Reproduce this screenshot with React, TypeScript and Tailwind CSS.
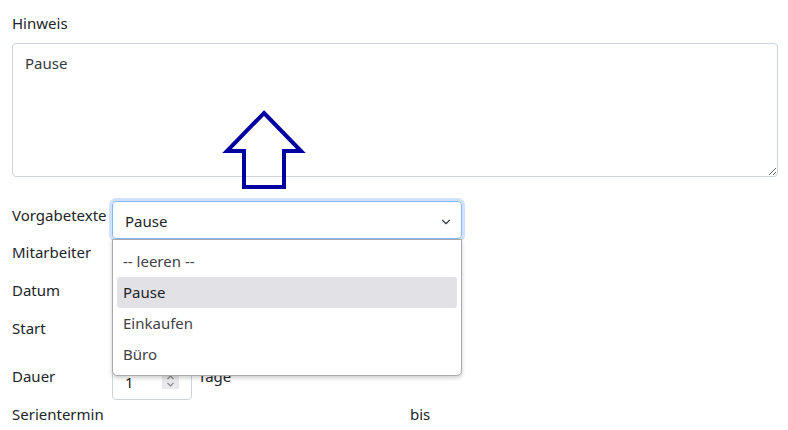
import { ChevronDown } from 'lucide-react';

const font = { fontFamily: '"Noto Sans", "Open Sans", sans-serif' };

function Row({ label, children, className = '' }: { label: string; children?: React.ReactNode; className?: string }) {
  return (
    <div className={`flex h-[38px] ${className}`}>
      <div className="w-[100px] shrink-0 pt-[2px] leading-6 whitespace-nowrap">{label}</div>
      <div className="flex-1 flex items-start">{children}</div>
    </div>
  );
}

export default function App() {
  const options = ['-- leeren --', 'Pause', 'Einkaufen', 'Büro'];

  return (
    <div className="relative w-[788px] h-[430px] overflow-hidden bg-white text-[15px] text-[#212529] px-3 pt-[11px]" style={font}>
      {/* Hinweis */}
      <div className="leading-6 mb-2">Hinweis</div>
      <textarea
        readOnly
        value="Pause"
        className="block w-[766px] h-[134px] border border-[#ced4da] rounded-[4px] px-3 py-[7px] leading-6 text-[#343a40] outline-none resize"
      />

      {/* Form rows */}
      <div className="mt-6 relative">
        <Row label="Vorgabetexte">
          <div className="w-[350px] h-[38px] border border-[#86b7fe] rounded-[4px] shadow-[0_0_0_3px_rgba(13,110,253,0.2)] flex items-center justify-between pl-3 pr-2">
            <span className="pt-[2px]">Pause</span>
            <ChevronDown size={14} strokeWidth={2} className="text-[#343a40] mt-1" />
          </div>
        </Row>
        <Row label="Mitarbeiter" className="h-[37px] -mt-[1px]" />
        <Row label="Datum" className="h-[37px]" />
        <Row label="Start" className="h-[38px]" />
        <Row label="Dauer" className="mt-[10px]">
          <div className="flex items-start gap-[6px]">
            <div className="w-[80px] h-[38px] border border-[#ced4da] rounded-[4px] flex items-center justify-between pl-3 pr-3">
              <span className="pt-[2px]">1</span>
              <div className="w-[17px] h-[16px] bg-[#e9e9ed] flex flex-col items-center justify-center text-[#8a8a8a]">
                <svg width="9" height="14" viewBox="0 0 9 14" fill="none" stroke="currentColor" strokeWidth="1.2">
                  <path d="M1.5 5 L4.5 2 L7.5 5" />
                  <path d="M1.5 9 L4.5 12 L7.5 9" />
                </svg>
              </div>
            </div>
            <span className="leading-6 pt-[2px]">Tage</span>
          </div>
        </Row>
        <div className="flex h-[38px]">
          <div className="w-[398px] shrink-0 pt-[2px] leading-6">Serientermin</div>
          <div className="pt-[2px] leading-6">bis</div>
        </div>

        {/* open dropdown list */}
        <div className="absolute left-[100px] top-[38px] w-[350px] h-[137px] z-10 bg-white border border-[#a9a9b0] rounded-b-[5px] shadow-[0_2px_4px_rgba(0,0,0,0.2)] px-[4px] pt-[6px]">
          {options.map((o) => (
            <div
              key={o}
              className={`h-[31px] leading-[31px] px-[6px] rounded-[3px] ${o === 'Pause' ? 'bg-[#e2e1e6] text-[#212529]' : 'text-[#3f3f46]'}`}
            >
              {o}
            </div>
          ))}
        </div>
      </div>

      {/* annotation arrow */}
      <svg className="absolute left-[220px] top-[106px] z-20" width="90" height="86" viewBox="220 106 90 86">
        <path
          d="M264 113 L301 151 L284 151 L284 187 L244 187 L244 151 L227 151 Z"
          fill="none"
          stroke="#0000a0"
          strokeWidth="4"
          strokeLinejoin="miter"
        />
      </svg>
    </div>
  );
}
